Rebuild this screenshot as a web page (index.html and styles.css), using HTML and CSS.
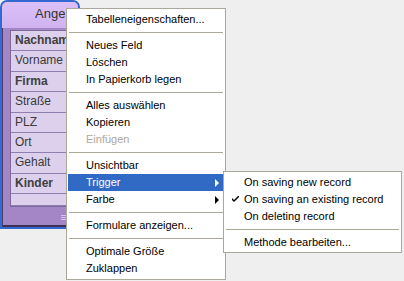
FILE: index.html
```html
<!DOCTYPE html>
<html lang="de">
<head>
    <meta charset="UTF-8">
    <title>Tabelle Angestellte</title>
    <link rel="stylesheet" href="styles.css">
</head>
<body>
    <div class="desk">
        <div class="table-win">
            <div class="win-title"><span class="title-text">Angestellte</span></div>
            <div class="fields">
                <div class="field bold">Nachname</div>
                <div class="field">Vorname</div>
                <div class="field bold">Firma</div>
                <div class="field">Straße</div>
                <div class="field">PLZ</div>
                <div class="field">Ort</div>
                <div class="field">Gehalt</div>
                <div class="field bold">Kinder</div>
                <div class="field empty"></div>
            </div>
            <div class="win-foot">
                <span class="grip"></span>
            </div>
        </div>

        <div class="menu main-menu">
            <div class="item">Tabelleneigenschaften...</div>
            <div class="sep"></div>
            <div class="item">Neues Feld</div>
            <div class="item">Löschen</div>
            <div class="item">In Papierkorb legen</div>
            <div class="sep"></div>
            <div class="item">Alles auswählen</div>
            <div class="item">Kopieren</div>
            <div class="item disabled">Einfügen</div>
            <div class="sep"></div>
            <div class="item">Unsichtbar</div>
            <div class="item active has-sub">Trigger</div>
            <div class="item has-sub">Farbe</div>
            <div class="sep"></div>
            <div class="item">Formulare anzeigen...</div>
            <div class="sep"></div>
            <div class="item">Optimale Größe</div>
            <div class="item">Zuklappen</div>
        </div>

        <div class="menu sub-menu">
            <div class="item">On saving new record</div>
            <div class="item checked">
                <svg class="check" width="7" height="7" viewBox="0 0 7 7">
                    <path d="M0 2 L2 4 L7 -1 L7 1 L2 6 L0 4 Z" fill="#000"/>
                </svg>
                On saving an existing record
            </div>
            <div class="item">On deleting record</div>
            <div class="sep"></div>
            <div class="item">Methode bearbeiten...</div>
        </div>
    </div>
</body>
</html>
```

FILE: styles.css
```css
* {
    margin: 0;
    padding: 0;
    box-sizing: border-box;
}

body {
    background: #efefef;
    font-family: "Liberation Sans", Arial, sans-serif;
    color: #000;
}

.desk {
    position: relative;
    width: 404px;
    height: 281px;
    overflow: hidden;
}

/* Tabellenfenster */
.table-win {
    position: absolute;
    left: 0;
    top: 0;
    width: 80px;
    height: 229px;
    border: 2px solid #3469d4;
    border-radius: 7px 7px 0 0;
    background: #a486c6;
    box-shadow: inset 1px 0 0 #4a3d68, inset 0 -2px 0 #3b3253;
    display: flex;
    flex-direction: column;
}

.win-title {
    height: 26px;
    padding: 4px 0 0 33px;
    background: linear-gradient(#dcc0f8, #cfb2ef);
    border-radius: 5px 5px 0 0;
    font-size: 13px;
    color: #333;
    white-space: nowrap;
}

/* der Rest des Titels liegt unter dem Menü */
.title-text {
    display: inline-block;
    max-width: 30px;
    overflow: hidden;
    vertical-align: top;
}

.fields {
    margin: 2px 0 0 8px;
    border: 1px solid #7d6a9c;
    border-right: none;
    background: #dcd0ec;
}

.field {
    height: 20.4px;
    border-bottom: 1px solid #8f7fae;
    padding-left: 4px;
    font-size: 12px;
    line-height: 19px;
    color: #3a3a3a;
    white-space: nowrap;
    overflow: hidden;
    max-width: 56px;
}

.field.bold {
    font-weight: bold;
    color: #404040;
}

.field.empty {
    height: 12px;
    max-width: none;
}

.win-foot {
    flex: 1;
    position: relative;
}

.grip {
    position: absolute;
    left: 59px;
    top: 8px;
    width: 5px;
    height: 5px;
    border-top: 1px solid #d6c2f2;
    border-bottom: 1px solid #d6c2f2;
}

.grip::after {
    content: "";
    position: absolute;
    left: 0;
    top: 1px;
    width: 5px;
    border-top: 1px solid #d6c2f2;
}

/* Kontextmenüs */
.menu {
    position: absolute;
    background: #fff;
    border: 1px solid #aca899;
    padding: 2px 1px;
    font-size: 11px;
}

.main-menu {
    left: 66px;
    top: 8px;
    width: 160px;
}

.sub-menu {
    left: 223px;
    top: 171px;
    width: 179px;
    padding-bottom: 1px;
}

.item {
    position: relative;
    height: 17px;
    line-height: 17px;
    padding-left: 18px;
    white-space: nowrap;
}

.sub-menu .item {
    padding-left: 19px;
}

.item.disabled {
    color: #aca899;
}

.item.active {
    background: #316ac5;
    color: #fff;
}

.item.has-sub::after {
    content: "";
    position: absolute;
    right: 5px;
    top: 5px;
    border-left: 4px solid #000;
    border-top: 4px solid transparent;
    border-bottom: 4px solid transparent;
}

.item.active.has-sub::after {
    border-left-color: #fff;
}

.check {
    position: absolute;
    left: 7px;
    top: 5px;
}

.sep {
    height: 9px;
    padding-top: 4px;
}

.sep::before {
    content: "";
    display: block;
    margin: 0 1px;
    border-top: 1px solid #aca899;
}
```
